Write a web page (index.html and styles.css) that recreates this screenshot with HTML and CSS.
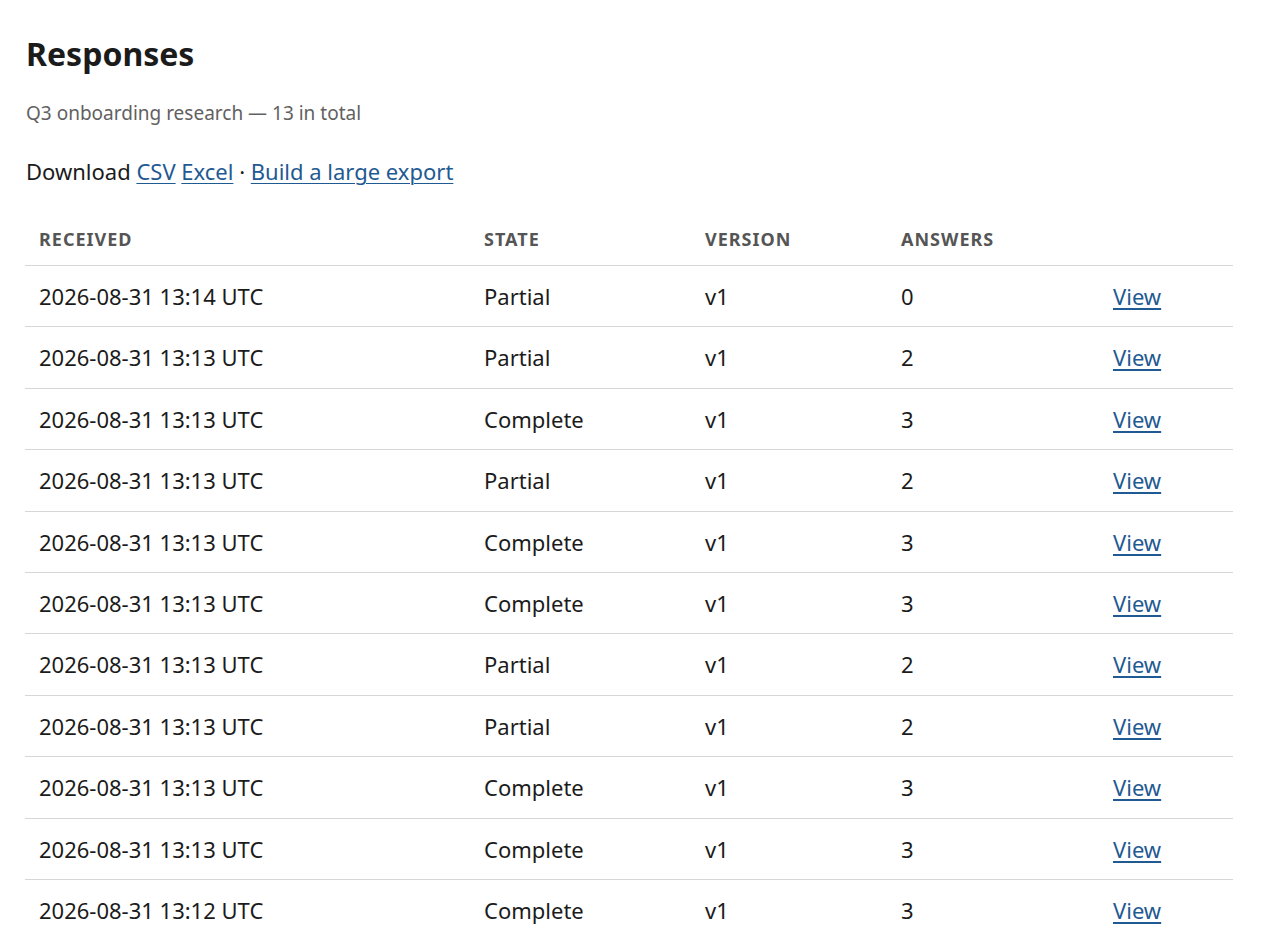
FILE: index.html
```html
<!DOCTYPE html>
<html lang="en">
<head>
<meta charset="utf-8">
<title>Responses</title>
<link rel="stylesheet" href="styles.css">
</head>
<body>
<main class="page">
  <h1 class="title">Responses</h1>
  <p class="subtitle">Q3 onboarding research — 13 in total</p>
  <p class="download">Download <a href="#">CSV</a> <a href="#">Excel</a> · <a href="#">Build a large export</a></p>
  <table class="responses">
    <thead>
      <tr>
        <th class="c-received">Received</th>
        <th class="c-state">State</th>
        <th class="c-version">Version</th>
        <th class="c-answers">Answers</th>
        <th class="c-action"></th>
      </tr>
    </thead>
    <tbody>
      <tr><td>2026-08-31 13:14 UTC</td><td>Partial</td><td>v1</td><td>0</td><td><a href="#">View</a></td></tr>
      <tr><td>2026-08-31 13:13 UTC</td><td>Partial</td><td>v1</td><td>2</td><td><a href="#">View</a></td></tr>
      <tr><td>2026-08-31 13:13 UTC</td><td>Complete</td><td>v1</td><td>3</td><td><a href="#">View</a></td></tr>
      <tr><td>2026-08-31 13:13 UTC</td><td>Partial</td><td>v1</td><td>2</td><td><a href="#">View</a></td></tr>
      <tr><td>2026-08-31 13:13 UTC</td><td>Complete</td><td>v1</td><td>3</td><td><a href="#">View</a></td></tr>
      <tr><td>2026-08-31 13:13 UTC</td><td>Complete</td><td>v1</td><td>3</td><td><a href="#">View</a></td></tr>
      <tr><td>2026-08-31 13:13 UTC</td><td>Partial</td><td>v1</td><td>2</td><td><a href="#">View</a></td></tr>
      <tr><td>2026-08-31 13:13 UTC</td><td>Partial</td><td>v1</td><td>2</td><td><a href="#">View</a></td></tr>
      <tr><td>2026-08-31 13:13 UTC</td><td>Complete</td><td>v1</td><td>3</td><td><a href="#">View</a></td></tr>
      <tr><td>2026-08-31 13:13 UTC</td><td>Complete</td><td>v1</td><td>3</td><td><a href="#">View</a></td></tr>
      <tr><td>2026-08-31 13:12 UTC</td><td>Complete</td><td>v1</td><td>3</td><td><a href="#">View</a></td></tr>
      <tr><td>2026-08-31 13:12 UTC</td><td>Complete</td><td>v1</td><td>3</td><td><a href="#">View</a></td></tr>
      <tr><td>2026-08-31 13:12 UTC</td><td>Partial</td><td>v1</td><td>1</td><td><a href="#">View</a></td></tr>
    </tbody>
  </table>
</main>
</body>
</html>
```

FILE: styles.css
```css
html, body {
  margin: 0;
  padding: 0;
  background: #ffffff;
}
body {
  font-family: "Noto Sans", "Open Sans", sans-serif;
  color: #1b1b1b;
  font-size: 22px;
}
.page {
  padding: 24px 55px 40px 25px;
}
.title {
  margin: 8px 0 0 1px;
  font-size: 32px;
  font-weight: 700;
  line-height: 44px;
  color: #1b1b1b;
}
.subtitle {
  margin: 24px 0 0 1px;
  font-size: 19px;
  line-height: 26px;
  color: #616161;
}
.download {
  margin: 30px 0 0 1px;
  font-size: 22px;
  line-height: 30px;
}
a {
  color: #1f5a92;
  text-decoration: underline;
  text-decoration-thickness: 2px;
  text-underline-offset: 3px;
}
.download a {
  text-decoration-thickness: 1px;
}
.responses {
  margin-top: 24px;
  width: 100%;
  border-collapse: collapse;
}
.responses th {
  text-align: left;
  font-size: 18px;
  font-weight: 700;
  line-height: 25px;
  letter-spacing: 1px;
  text-transform: uppercase;
  color: #555555;
  padding: 17px 14px 13px;
  border-bottom: 1px solid #d6d6d6;
}
.responses td {
  padding: 14px 14px;
  line-height: 32.4px;
  border-bottom: 1px solid #d6d6d6;
}
.c-received { width: 417px; }
.c-state { width: 193px; }
.c-version { width: 168px; }
.c-answers { width: 184px; }
```
